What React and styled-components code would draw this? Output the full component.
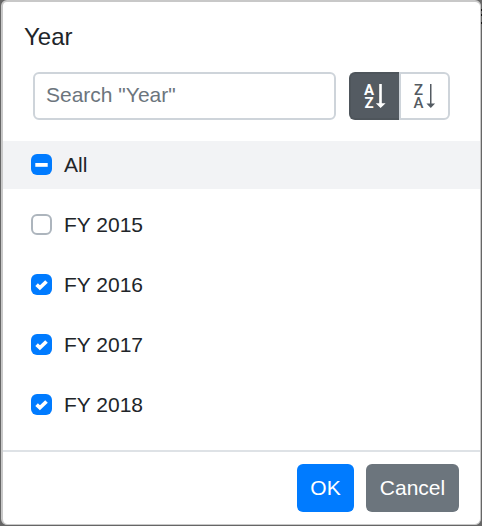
import React, { useState } from "react";
import styled, { createGlobalStyle } from "styled-components";

const GlobalStyle = createGlobalStyle`
  *, *::before, *::after { box-sizing: border-box; }
  body {
    margin: 0;
    background: #666;
    font-family: "Liberation Sans", Arial, sans-serif;
    color: #212529;
    overflow: hidden;
  }
  button, input { font-family: inherit; }
`;

const Backdrop = styled.div`
  width: 482px;
  height: 526px;
  padding: 0 1px 1px;
  background:
    linear-gradient(#111, #111) 481px 9px / 1px 2px no-repeat,
    linear-gradient(#111, #111) 481px 14px / 1px 2px no-repeat,
    linear-gradient(#111, #111) 481px 22px / 1px 2px no-repeat,
    #666;
`;

const Dialog = styled.section`
  height: 525px;
  display: flex;
  flex-direction: column;
  background: #fff;
  border: 2px solid #c8c8c8;
  border-right-width: 1px;
  border-bottom-width: 1px;
  border-radius: 6px;
`;

const Title = styled.h1`
  margin: 0;
  padding: 20px 0 0 21px;
  height: 70px;
  font-size: 24px;
  line-height: 30px;
  font-weight: 400;
`;

const Toolbar = styled.div`
  display: flex;
  gap: 13px;
  padding-left: 30px;
  height: 48px;
`;

const SearchInput = styled.input`
  width: 303px;
  height: 48px;
  padding: 0 11px 2px;
  font-size: 21px;
  color: #212529;
  border: 2px solid #ced4da;
  border-radius: 6px;
  outline: none;
  &::placeholder { color: #6c757d; opacity: 1; }
`;

const SortGroup = styled.div`
  display: flex;
`;

const SortButton = styled.button`
  width: ${(p) => (p.$active ? 50 : 51)}px;
  height: 48px;
  padding: 0;
  display: flex;
  align-items: center;
  justify-content: center;
  color: ${(p) => (p.$active ? "#fff" : "#545b62")};
  background: ${(p) => (p.$active ? "#545b62" : "#fff")};
  border: 2px solid ${(p) => (p.$active ? "#4e555b" : "#ced4da")};
  &:first-child { border-radius: 6px 0 0 6px; border-right: 0; }
  &:last-child { border-radius: 0 6px 6px 0; }
`;

const List = styled.div`
  display: flex;
  flex-direction: column;
  gap: 12px;
  margin-top: 21px;
  height: 309px;
`;

const Row = styled.label`
  height: 48px;
  flex: none;
  display: flex;
  align-items: center;
  gap: 12px;
  padding-left: 28px;
  font-size: 21px;
  background: ${(p) => (p.$highlighted ? "#f2f3f5" : "transparent")};
`;

const Box = styled.span`
  width: 21px;
  height: 21px;
  margin-top: -1px;
  flex: none;
  display: flex;
  align-items: center;
  justify-content: center;
  border-radius: 6px;
  border: ${(p) => (p.$filled ? "0" : "2px solid #adb5bd")};
  background: ${(p) => (p.$filled ? "#007bff" : "#fff")};
`;

const Footer = styled.footer`
  flex: 1;
  display: flex;
  justify-content: flex-end;
  gap: 12px;
  padding: 12px 21px 0 0;
  border-top: 2px solid #dee2e6;
`;

const ActionButton = styled.button`
  width: ${(p) => (p.$primary ? 57 : 93)}px;
  height: 48px;
  padding: 0 0 1px;
  font-size: 21px;
  color: #fff;
  border: 0;
  border-radius: 6px;
  background: ${(p) => (p.$primary ? "#007bff" : "#6c757d")};
`;

const SortGlyph = styled.svg`
  overflow: visible;
`;

const Letter = styled.text`
  font-family: Roboto, sans-serif;
  font-size: 15px;
  font-weight: ${(p) => (p.$bold ? 700 : 500)};
  text-anchor: middle;
`;

function SortIcon({ top, bottom, bold }) {
  const x = bold ? 6 : 5.6;
  return (
    <SortGlyph width="24" height="28" viewBox="0 0 24 28" fill="currentColor">
      <Letter $bold={bold} x={x} y="13">{top}</Letter>
      <Letter $bold={bold} x={x} y="26">{bottom}</Letter>
      <path
        d={
          bold
            ? "M16.2 2h2.6v19.3h3.8L17.6 26l-4.8-4.7h3.4z"
            : "M17 2h1.5v19.5h3.6L17.8 26l-4.4-4.5H17z"
        }
      />
    </SortGlyph>
  );
}

function CheckMark() {
  return (
    <svg width="21" height="21" viewBox="0 0 21 21">
      <path d="M5.6 10.6l3.3 3.2 6.6-6.3" fill="none" stroke="#fff" strokeWidth="3.7" />
    </svg>
  );
}

function MinusMark() {
  return (
    <svg width="21" height="21" viewBox="0 0 21 21">
      <rect x="4.3" y="9" width="12.4" height="3.8" fill="#fff" />
    </svg>
  );
}

const items = [
  { label: "All", state: "mixed" },
  { label: "FY 2015", state: "off" },
  { label: "FY 2016", state: "on" },
  { label: "FY 2017", state: "on" },
  { label: "FY 2018", state: "on" },
];

export default function App() {
  const [query, setQuery] = useState("");
  return (
    <Backdrop>
      <GlobalStyle />
      <Dialog role="dialog" aria-label="Year">
        <Title>Year</Title>
        <Toolbar>
          <SearchInput
            placeholder={'Search "Year"'}
            value={query}
            onChange={(e) => setQuery(e.target.value)}
          />
          <SortGroup>
            <SortButton $active aria-label="Ascending">
              <SortIcon top="A" bottom="Z" bold />
            </SortButton>
            <SortButton aria-label="Descending">
              <SortIcon top="Z" bottom="A" />
            </SortButton>
          </SortGroup>
        </Toolbar>
        <List>
          {items.map(({ label, state }) => (
            <Row key={label} $highlighted={state === "mixed"}>
              <Box $filled={state !== "off"}>
                {state === "on" && <CheckMark />}
                {state === "mixed" && <MinusMark />}
              </Box>
              {label}
            </Row>
          ))}
        </List>
        <Footer>
          <ActionButton $primary>OK</ActionButton>
          <ActionButton>Cancel</ActionButton>
        </Footer>
      </Dialog>
    </Backdrop>
  );
}
